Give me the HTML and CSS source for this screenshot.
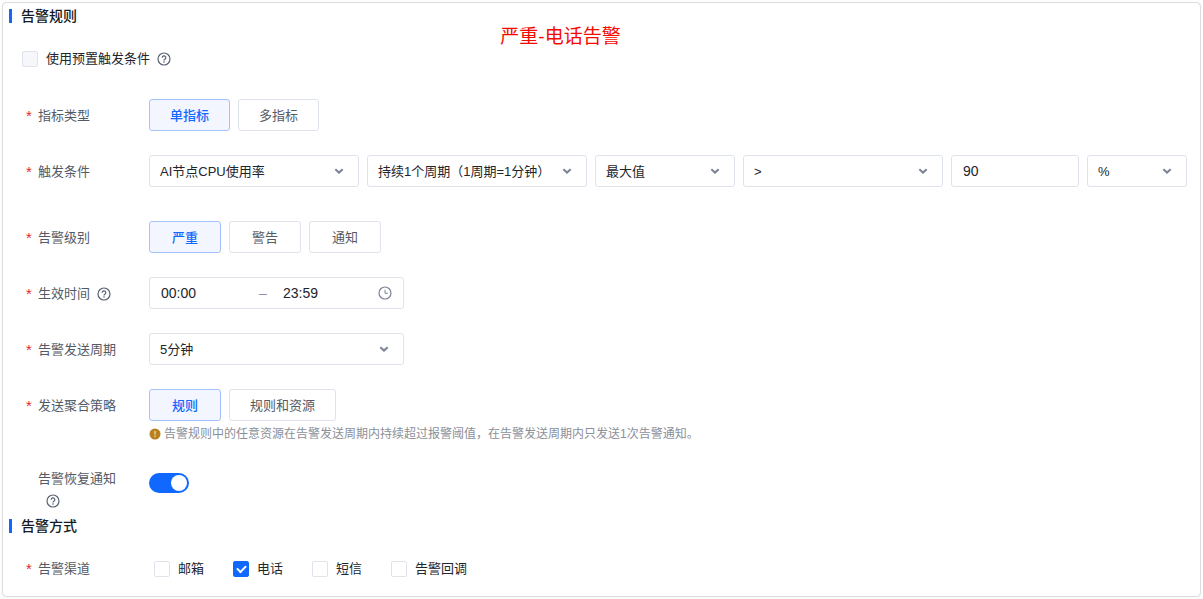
FILE: index.html
```html
<!DOCTYPE html>
<html lang="zh-CN">
<head>
<meta charset="utf-8">
<title>告警规则</title>
<link rel="stylesheet" href="styles.css">
</head>
<body>
<svg class="sprite" aria-hidden="true">
  <symbol id="help" viewBox="0 0 14 14"><circle cx="7" cy="7" r="6" fill="none" stroke="currentColor" stroke-width="1.2"/><path d="M5.2 5.7a1.8 1.8 0 1 1 2.7 1.5c-.6.4-.9.6-.9 1.3" fill="none" stroke="currentColor" stroke-width="1.2"/><circle cx="7" cy="10" r=".8" fill="currentColor"/></symbol>
  <symbol id="chevron" viewBox="0 0 10 10"><path d="M1.3 3.2 5 6.6 8.7 3.2" fill="none" stroke="currentColor" stroke-width="2"/></symbol>
</svg>
<main class="card">
  <p class="note">严重-电话告警</p>
  <h2 class="title">告警规则</h2>
  <div class="preset">
    <label class="check"><input type="checkbox" disabled>使用预置触发条件</label>
    <svg class="help"><use href="#help"/></svg>
  </div>

  <div class="row">
    <span class="label required" id="l-type">指标类型</span>
    <div class="group" role="group" aria-labelledby="l-type">
      <button type="button" class="option selected" aria-pressed="true">单指标</button>
      <button type="button" class="option" aria-pressed="false">多指标</button>
    </div>
  </div>

  <div class="row wide-gap">
    <label class="label required" for="metric">触发条件</label>
    <div class="group">
      <span class="select metric"><select id="metric"><option>AI节点CPU使用率</option></select><svg class="chevron"><use href="#chevron"/></svg></span>
      <span class="select duration"><select aria-label="持续周期"><option>持续1个周期（1周期=1分钟）</option></select><svg class="chevron"><use href="#chevron"/></svg></span>
      <span class="select stat"><select aria-label="统计方式"><option>最大值</option></select><svg class="chevron"><use href="#chevron"/></svg></span>
      <span class="select compare"><select aria-label="比较"><option>&gt;</option></select><svg class="chevron"><use href="#chevron"/></svg></span>
      <input class="threshold" type="text" value="90" aria-label="阈值">
      <span class="select unit"><select aria-label="单位"><option>%</option></select><svg class="chevron"><use href="#chevron"/></svg></span>
    </div>
  </div>

  <div class="row">
    <span class="label required" id="l-level">告警级别</span>
    <div class="group" role="group" aria-labelledby="l-level">
      <button type="button" class="option selected" aria-pressed="true">严重</button>
      <button type="button" class="option" aria-pressed="false">警告</button>
      <button type="button" class="option" aria-pressed="false">通知</button>
    </div>
  </div>

  <div class="row">
    <label class="label required" for="start">生效时间<svg class="help"><use href="#help"/></svg></label>
    <div class="range">
      <input id="start" type="text" value="00:00">
      <span class="dash">–</span>
      <input type="text" value="23:59" aria-label="结束时间">
      <svg class="clock" viewBox="0 0 14 14"><circle cx="7" cy="7" r="6" fill="none" stroke="currentColor" stroke-width="1.2"/><path d="M7 3.8V7.3H9.8" fill="none" stroke="currentColor"/></svg>
    </div>
  </div>

  <div class="row">
    <label class="label required" for="cycle">告警发送周期</label>
    <div class="group">
      <span class="select cycle"><select id="cycle"><option>5分钟</option></select><svg class="chevron"><use href="#chevron"/></svg></span>
    </div>
  </div>

  <div class="row">
    <span class="label required" id="l-policy">发送聚合策略</span>
    <div class="field">
      <div class="group" role="group" aria-labelledby="l-policy">
        <button type="button" class="option selected" aria-pressed="true">规则</button>
        <button type="button" class="option" aria-pressed="false">规则和资源</button>
      </div>
      <p class="hint"><svg class="warn" viewBox="0 0 12 12"><circle cx="6" cy="6" r="5.5" fill="#b9801f"/><path d="M6 3v3.500M6 7.600v1.300" stroke="#f3dfb5" stroke-width="1.3"/></svg>告警规则中的任意资源在告警发送周期内持续超过报警阈值，在告警发送周期内只发送1次告警通知。</p>
    </div>
  </div>

  <div class="row recover">
    <label class="label stacked" for="recover">告警恢复通知<svg class="help"><use href="#help"/></svg></label>
    <input class="switch" id="recover" type="checkbox" role="switch" checked>
  </div>

  <h2 class="title">告警方式</h2>
  <div class="row channels">
    <span class="label required" id="l-channel">告警渠道</span>
    <div class="checks" role="group" aria-labelledby="l-channel">
      <label class="check"><input type="checkbox">邮箱</label>
      <label class="check"><input type="checkbox" checked>电话</label>
      <label class="check"><input type="checkbox">短信</label>
      <label class="check"><input type="checkbox">告警回调</label>
    </div>
  </div>
</main>
</body>
</html>
```
FILE: styles.css
```css
* { box-sizing: border-box; }
body {
  margin: 2px;
  background: #fdfdfd;
  color: #22252b;
  font: 13px/20px "Liberation Sans", "Noto Sans CJK SC", sans-serif;
}
.sprite { position: absolute; width: 0; height: 0; }
button, input, select { font: inherit; color: inherit; margin: 0; }
.card {
  position: relative;
  padding-bottom: 17px;
  background: #fff;
  border: 1px solid #dcdcdc;
  border-radius: 5px;
  box-shadow: 0 0 2px #dddddd;
}
.note {
  position: absolute;
  top: 21px;
  left: 0;
  right: 82px;
  margin: 0;
  color: #f50a00;
  font-size: 19px;
  line-height: 26px;
  text-align: center;
}
.title {
  display: flex;
  align-items: center;
  gap: 9px;
  margin: 0;
  padding-left: 6px;
  color: #151b26;
  font-size: 14px;
  font-weight: 500;
  line-height: 26px;
}
.title::before { content: ""; width: 3px; height: 14px; background: #1068ff; }
.preset { display: flex; align-items: center; gap: 7px; margin: 20px 0 30px 19px; }
.check { display: flex; align-items: center; gap: 8px; }
.check input {
  appearance: none;
  display: grid;
  place-items: center;
  width: 16px;
  height: 16px;
  border: 1px solid #dfe3ec;
  border-radius: 2px;
  background: #fff;
}
.check input:disabled { background: #f6f7fa; }
.check input:checked { background: #1068ff; border-color: #1068ff; }
.check input:checked::before {
  content: "";
  width: 7px;
  height: 4px;
  margin-bottom: 2px;
  border: solid #fff;
  border-width: 0 0 2px 2px;
  transform: rotate(-45deg);
}
.help { flex: none; width: 14px; height: 14px; color: #596273; }
.row { display: flex; align-items: flex-start; margin-bottom: 24px; padding: 0 13px 0 23px; }
.wide-gap { margin-bottom: 34px; }
.label {
  display: flex;
  flex: none;
  align-items: center;
  gap: 7px;
  width: 123px;
  padding: 2px 0 0 12px;
  color: #545a66;
  line-height: 30px;
}
.required { padding-left: 0; }
.required::before { content: "*"; width: 5px; color: #e02b2b; font-size: 15px; }
.group { display: flex; flex: 1; gap: 8px; min-width: 0; }
.option {
  height: 32px;
  padding: 2px 20px 0;
  min-width: 72px;
  border: 1px solid #dfe3ec;
  border-radius: 3px;
  background: #fff;
  color: #545a66;
}
.selected { border-color: #a3c3ff; background: #f3f6ff; color: #1068ff; font-weight: 500; }
.select { position: relative; flex: 0 1 auto; min-width: 0; }
.metric { width: 210px; }
.duration { width: 220px; }
.stat { width: 140px; }
.compare { width: 200px; }
.unit { width: 100px; }
.cycle { width: 255px; }
.select select {
  appearance: none;
  width: 100%;
  height: 32px;
  padding: 2px 24px 0 10px;
  border: 1px solid #dfe3ec;
  border-radius: 3px;
  background: #fff;
}
.chevron {
  position: absolute;
  top: 11px;
  right: 15px;
  width: 10px;
  height: 10px;
  color: #7b8394;
  pointer-events: none;
}
.threshold {
  width: 128px;
  min-width: 0;
  height: 32px;
  padding: 0 11px;
  border: 1px solid #dfe3ec;
  border-radius: 3px;
  font-size: 14px;
}
.range {
  display: flex;
  align-items: center;
  width: 255px;
  height: 32px;
  padding: 0 11px;
  border: 1px solid #dfe3ec;
  border-radius: 3px;
  font-size: 14px;
}
.range input { flex: 1; width: 0; padding: 0; border: 0; background: none; }
.range input:first-child { flex: none; width: 98px; }
.dash { width: 24px; color: #8b92a0; }
.clock { flex: none; width: 14px; height: 14px; color: #7b8394; }
.field { flex: 1; }
.hint {
  display: flex;
  align-items: center;
  gap: 3px;
  margin: 3px 0 0;
  color: #8b8f98;
  font-size: 12px;
}
.warn { flex: none; width: 12px; height: 12px; }
.recover { margin-bottom: 1px; }
.stacked { flex-wrap: wrap; gap: 0; line-height: 22px; padding: 0 20px 0 12px; }
.stacked .help { margin: 4px 8px; }
.switch {
  appearance: none;
  display: flex;
  justify-content: flex-end;
  width: 40px;
  height: 20px;
  margin-top: 5px;
  padding: 2px;
  border-radius: 10px;
  background: #1068ff;
}
.switch::before { content: ""; width: 16px; height: 16px; border-radius: 50%; background: #fff; }
.switch:not(:checked) { justify-content: flex-start; background: #c5cad4; }
.channels { margin: 20px 0 0; }
.channels .label { padding-top: 0; line-height: 20px; }
.checks { display: flex; flex-wrap: wrap; gap: 29px; padding-left: 5px; }
```
